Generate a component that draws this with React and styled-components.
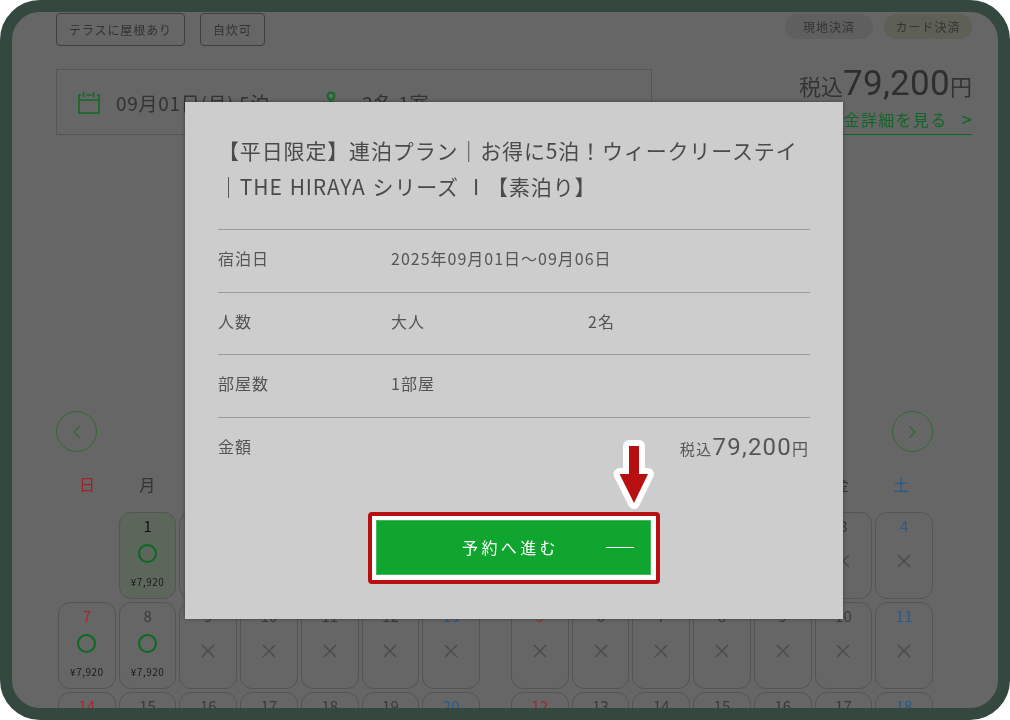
import React from "react";
import styled, { createGlobalStyle } from "styled-components";

const Global = createGlobalStyle`
  html, body { margin: 0; padding: 0; background: #fff; }
  body { font-family: "Noto Sans CJK JP", "Noto Sans", sans-serif; }
  * { box-sizing: border-box; }
`;

const Frame = styled.div`
  position: relative;
  width: 1010px;
  height: 720px;
  border: 12px solid #354840;
  border-radius: 40px;
  background: #666;
  overflow: hidden;
`;

const Content = styled.div`
  padding: 1px 26px 0 44px;
  display: flex;
  flex-direction: column;
  filter: blur(0.35px);
`;

const TopRow = styled.div`
  display: flex;
  justify-content: space-between;
  align-items: flex-start;
  height: 33px;
`;

const Group = styled.div`
  display: flex;
  gap: ${(p) => p.$gap}px;
  margin-top: ${(p) => p.$top || 0}px;
`;

const Tag = styled.span`
  display: flex;
  align-items: center;
  height: 33px;
  padding: 0 12px;
  border: 1px solid #3f3f3f;
  border-radius: 4px;
  font-size: 12px;
  letter-spacing: 0.9px;
  color: #333;
`;

const Pill = styled.span`
  display: flex;
  align-items: center;
  justify-content: center;
  width: 88px;
  height: 25px;
  border-radius: 13px;
  background: ${(p) => p.$bg};
  font-size: 12px;
  letter-spacing: 1px;
  color: #333;
`;

const SearchRow = styled.div`
  display: flex;
  justify-content: space-between;
  align-items: flex-start;
  margin-top: 23px;
  height: 66px;
`;

const SearchBox = styled.div`
  display: flex;
  align-items: center;
  width: 596px;
  height: 66px;
  padding-left: 21px;
  border: 1px solid #555;
  font-size: 19px;
  letter-spacing: 0.7px;
  color: #333;
`;

const SearchText = styled.span`
  margin-left: ${(p) => p.$left}px;
  white-space: nowrap;
`;

const PriceBlock = styled.div`
  display: flex;
  flex-direction: column;
  align-items: flex-end;
  margin-top: -8px;
`;

const Price = styled.div`
  display: flex;
  align-items: baseline;
  height: 44px;
  font-size: 22px;
  line-height: 46px;
  color: #333;
`;

const PriceNumber = styled.span`
  font-family: Roboto, "Noto Sans", sans-serif;
  font-size: 35px;
  letter-spacing: 0.3px;
  color: #2e2e2e;
`;

const DetailLink = styled.a`
  display: flex;
  justify-content: flex-end;
  align-items: center;
  width: 172px;
  height: 29px;
  padding-bottom: 3px;
  margin-top: 1px;
  border-bottom: 1px solid #0c6b22;
  font-size: 16px;
  line-height: 24px;
  letter-spacing: 1.3px;
  color: #12662a;
  white-space: nowrap;
`;

const LinkChevron = styled.span`
  margin-left: 14px;
  font-size: 19px;
  letter-spacing: 0;
`;

const NavRow = styled.div`
  display: flex;
  justify-content: space-between;
  width: 877px;
  margin-top: 276px;
`;

const NavButton = styled.button`
  display: flex;
  align-items: center;
  justify-content: center;
  width: 41px;
  height: 41px;
  padding: 0;
  border: 1px solid #2f6b30;
  border-radius: 50%;
  background: transparent;
`;

const Months = styled.div`
  display: flex;
  gap: 31px;
  margin-top: 20px;
  margin-left: 2px;
`;

const Month = styled.div`
  width: 422px;
`;

const WeekRow = styled.div`
  display: grid;
  grid-template-columns: repeat(7, 1fr);
  column-gap: 2px;
  height: 40px;
  padding-right: 3px;
`;

const WeekDay = styled.span`
  font-size: 16px;
  line-height: 24px;
  text-align: center;
  color: ${(p) => p.$color};
`;

const DayGrid = styled.div`
  display: grid;
  grid-template-columns: repeat(7, 1fr);
  grid-auto-rows: 87px;
  gap: 3px;
`;

const Day = styled.div`
  display: flex;
  flex-direction: column;
  align-items: center;
  padding-top: 3px;
  border: 1px solid ${(p) => (p.$empty ? "transparent" : "#545454")};
  border-radius: 12px;
  background: ${(p) => (p.$selected ? "#5c665b" : "transparent")};
`;

const DayNumber = styled.span`
  font-size: 15px;
  line-height: 20px;
  color: ${(p) => p.$color};
`;

const Ring = styled.span`
  width: 19px;
  height: 19px;
  margin-top: 8px;
  border: 2.5px solid #0a6a22;
  border-radius: 50%;
`;

const DayPrice = styled.span`
  margin-top: 12px;
  font-size: 10px;
  letter-spacing: 0.5px;
  line-height: 14px;
  color: #1a1a1a;
`;

const Cross = styled.svg`
  width: 14px;
  height: 14px;
  margin-top: 18px;
`;

const Modal = styled.div`
  position: absolute;
  left: 173px;
  top: 90px;
  width: 658px;
  height: 517px;
  padding: 30px 33px 0;
  background: #cdcdcd;
  box-shadow: 0 0 4px rgba(0, 0, 0, 0.35);
  filter: blur(0.35px);
`;

const Title = styled.h2`
  margin: 0;
  padding-bottom: 25px;
  font-size: 21px;
  font-weight: 400;
  line-height: 36px;
  letter-spacing: 0.85px;
  word-spacing: 1.5px;
  color: #4a4a4a;
`;

const Row = styled.div`
  display: flex;
  align-items: flex-start;
  height: ${(p) => p.$h || 62.6}px;
  padding-top: 16px;
  border-top: 1px solid #9c9c9c;
  font-size: 16px;
  letter-spacing: 1px;
  line-height: 24px;
  color: #555;
`;

const RowLabel = styled.span`
  width: 173px;
`;

const RowValue = styled.span`
  width: ${(p) => p.$w || 197}px;
`;

const Total = styled.div`
  display: flex;
  align-items: baseline;
  margin-left: auto;
  margin-top: -5px;
  padding-right: 2px;
  font-size: 15px;
  letter-spacing: 1.4px;
  line-height: 36px;
  color: #555;
`;

const TotalNumber = styled.span`
  font-family: Roboto, "Noto Sans", sans-serif;
  font-size: 24px;
  letter-spacing: 1.2px;
`;

const TotalYen = styled.span`
  font-size: 16px;
  letter-spacing: 0;
`;

const Highlight = styled.div`
  width: 292px;
  margin: 32px 0 0 150px;
  padding: 4px 5px 5px 4px;
  border: 4px solid #b81010;
  border-radius: 4px;
  background: #fff;
`;

const CTA = styled.button`
  position: relative;
  display: block;
  width: 100%;
  height: 55px;
  border: 1px solid #43bb5b;
  background: #0fa52f;
  font-family: inherit;
  font-size: 16px;
  letter-spacing: 3.4px;
  color: #fff;
  padding: 0 6px 0 0;
`;

const CTALine = styled.span`
  position: absolute;
  right: 16px;
  top: 50%;
  width: 28px;
  height: 1px;
  background: #fff;
`;

const Pointer = styled.svg`
  position: absolute;
  left: 425px;
  top: 338px;
  width: 48px;
  height: 72px;
`;

const weekdays = ["日", "月", "火", "水", "木", "金", "土"];
const colorFor = (col) => (col === 0 ? "#a12a30" : col === 6 ? "#2a5a85" : "#3a3a3a");

const X = () => (
  <Cross viewBox="0 0 14 14" fill="none" stroke="#4c4c4c" strokeWidth="1.5">
    <path d="M1 1 13 13M13 1 1 13" />
  </Cross>
);

const MonthView = ({ lead, rows, available = [], selected }) => {
  const total = rows * 7;
  const cells = Array.from({ length: total }, (_, i) => i - lead + 1);
  return (
    <Month>
      <WeekRow>
        {weekdays.map((w, i) => (
          <WeekDay key={w} $color={i === 0 ? "#a0222a" : i === 6 ? "#2a5a85" : "#333"}>{w}</WeekDay>
        ))}
      </WeekRow>
      <DayGrid>
        {cells.map((d, i) =>
          d < 1 ? (
            <Day key={i} $empty />
          ) : (
            <Day key={i} $selected={d === selected}>
              <DayNumber $color={d === selected ? "#111" : colorFor(i % 7)}>{d}</DayNumber>
              {available.includes(d) ? (
                <>
                  <Ring />
                  <DayPrice>¥7,920</DayPrice>
                </>
              ) : (
                <X />
              )}
            </Day>
          )
        )}
      </DayGrid>
    </Month>
  );
};

export default function App() {
  return (
    <>
      <Global />
      <Frame>
        <Content>
          <TopRow>
            <Group $gap={15}>
              <Tag>テラスに屋根あり</Tag>
              <Tag>自炊可</Tag>
            </Group>
            <Group $gap={11} $top={1}>
              <Pill $bg="#5f5f5f">現地決済</Pill>
              <Pill $bg="#5e5f55">カード決済</Pill>
            </Group>
          </TopRow>
          <SearchRow>
            <SearchBox>
              <svg width="23" height="23" viewBox="0 0 23 23" fill="none" stroke="#0f6b22" strokeWidth="1.6">
                <path d="M3 4H1v18h20V4h-2M8.500 4h5M1 9h20M5.500 1v5M15.500 1v5" />
              </svg>
              <SearchText $left={15}>09月01日(月) 5泊</SearchText>
              <svg style={{ marginLeft: 55 }} width="14" height="23" viewBox="0 0 14 23" fill="none" stroke="#0f6b22" strokeWidth="2">
                <circle cx="6" cy="5" r="3.500" />
                <path d="M0 21v-4a6 6 0 0 1 12 0v4" />
              </svg>
              <SearchText $left={23}>2名 1室</SearchText>
            </SearchBox>
            <PriceBlock>
              <Price>
                税込<PriceNumber>79,200</PriceNumber>円
              </Price>
              <DetailLink>料金詳細を見る<LinkChevron>&gt;</LinkChevron></DetailLink>
            </PriceBlock>
          </SearchRow>
          <NavRow>
            <NavButton aria-label="前へ">
              <svg width="9" height="14" viewBox="0 0 9 14" fill="none" stroke="#2f6b30" strokeWidth="1.1">
                <path d="M8 1 2 7l6 6" />
              </svg>
            </NavButton>
            <NavButton aria-label="次へ">
              <svg width="9" height="14" viewBox="0 0 9 14" fill="none" stroke="#2f6b30" strokeWidth="1.1">
                <path d="m1 1 6 6-6 6" />
              </svg>
            </NavButton>
          </NavRow>
          <Months>
            <MonthView lead={1} rows={3} available={[1, 7, 8]} selected={1} />
            <MonthView lead={3} rows={3} />
          </Months>
        </Content>
        <Modal>
          <Title>
            【平日限定】連泊プラン｜お得に5泊！ウィークリーステイ
            <br />
            ｜THE HIRAYA シリーズ &nbsp;I 【素泊り】
          </Title>
          <Row>
            <RowLabel>宿泊日</RowLabel>
            <RowValue $w={300}>2025年09月01日〜09月06日</RowValue>
          </Row>
          <Row>
            <RowLabel>人数</RowLabel>
            <RowValue>大人</RowValue>
            <RowValue>2名</RowValue>
          </Row>
          <Row>
            <RowLabel>部屋数</RowLabel>
            <RowValue>1部屋</RowValue>
          </Row>
          <Row $h={63}>
            <RowLabel>金額</RowLabel>
            <Total>
              税込<TotalNumber>79,200</TotalNumber><TotalYen>円</TotalYen>
            </Total>
          </Row>
          <Highlight>
            <CTA>
              予約へ進む
              <CTALine />
            </CTA>
          </Highlight>
          <Pointer viewBox="0 0 48 72">
            <path
              d="M19 6H29V34H38L24 63 9.500 34H19Z"
              fill="#b81010"
              stroke="#fff"
              strokeWidth="12"
              strokeLinejoin="round"
              paintOrder="stroke"
            />
          </Pointer>
        </Modal>
      </Frame>
    </>
  );
}
